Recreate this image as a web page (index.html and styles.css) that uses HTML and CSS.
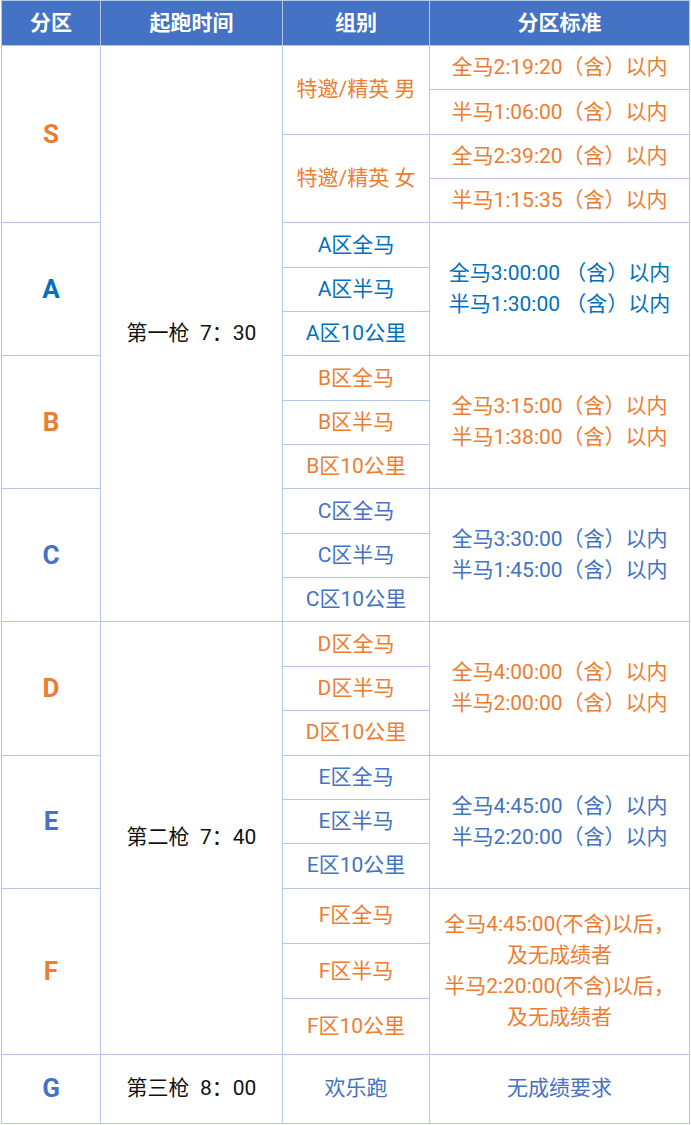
FILE: index.html
```html
<!DOCTYPE html>
<html lang="zh-CN">
<head>
    <meta charset="UTF-8">
    <meta name="viewport" content="width=device-width, initial-scale=1.0">
    <title>分区标准</title>
    <link rel="stylesheet" href="styles.css">
</head>
<body>
    <table class="zones">
        <colgroup>
            <col class="c-zone">
            <col class="c-time">
            <col class="c-group">
            <col class="c-rule">
        </colgroup>
        <thead>
            <tr>
                <th>分区</th>
                <th>起跑时间</th>
                <th>组别</th>
                <th>分区标准</th>
            </tr>
        </thead>
        <tbody>
            <!-- 第一枪 -->
            <tr class="row">
                <td rowspan="4" class="zone orange">S</td>
                <td rowspan="13" class="time">第一枪&nbsp;&nbsp;7：30</td>
                <td rowspan="2" class="orange">特邀/精英 男</td>
                <td class="orange">全马2:19:20（含）以内</td>
            </tr>
            <tr class="row">
                <td class="orange">半马1:06:00（含）以内</td>
            </tr>
            <tr class="row">
                <td rowspan="2" class="orange">特邀/精英 女</td>
                <td class="orange">全马2:39:20（含）以内</td>
            </tr>
            <tr class="row">
                <td class="orange">半马1:15:35（含）以内</td>
            </tr>

            <tr class="row">
                <td rowspan="3" class="zone deep">A</td>
                <td class="deep">A区全马</td>
                <td rowspan="3" class="deep rule">全马3:00:00 （含）以内<br>半马1:30:00 （含）以内</td>
            </tr>
            <tr class="row"><td class="deep">A区半马</td></tr>
            <tr class="row"><td class="deep">A区10公里</td></tr>

            <tr class="row">
                <td rowspan="3" class="zone orange">B</td>
                <td class="orange">B区全马</td>
                <td rowspan="3" class="orange rule">全马3:15:00（含）以内<br>半马1:38:00（含）以内</td>
            </tr>
            <tr class="row"><td class="orange">B区半马</td></tr>
            <tr class="row"><td class="orange">B区10公里</td></tr>

            <tr class="row">
                <td rowspan="3" class="zone blue">C</td>
                <td class="blue">C区全马</td>
                <td rowspan="3" class="blue rule">全马3:30:00（含）以内<br>半马1:45:00（含）以内</td>
            </tr>
            <tr class="row"><td class="blue">C区半马</td></tr>
            <tr class="row"><td class="blue">C区10公里</td></tr>

            <!-- 第二枪 -->
            <tr class="row">
                <td rowspan="3" class="zone orange">D</td>
                <td rowspan="9" class="time">第二枪&nbsp;&nbsp;7：40</td>
                <td class="orange">D区全马</td>
                <td rowspan="3" class="orange rule">全马4:00:00（含）以内<br>半马2:00:00（含）以内</td>
            </tr>
            <tr class="row"><td class="orange">D区半马</td></tr>
            <tr class="row"><td class="orange">D区10公里</td></tr>

            <tr class="row">
                <td rowspan="3" class="zone blue">E</td>
                <td class="blue">E区全马</td>
                <td rowspan="3" class="blue rule">全马4:45:00（含）以内<br>半马2:20:00（含）以内</td>
            </tr>
            <tr class="row"><td class="blue">E区半马</td></tr>
            <tr class="row"><td class="blue">E区10公里</td></tr>

            <tr class="row tall">
                <td rowspan="3" class="zone orange">F</td>
                <td class="orange">F区全马</td>
                <td rowspan="3" class="orange rule">全马4:45:00(不含)以后，<br>及无成绩者<br>半马2:20:00(不含)以后，<br>及无成绩者</td>
            </tr>
            <tr class="row tall"><td class="orange">F区半马</td></tr>
            <tr class="row tall"><td class="orange">F区10公里</td></tr>

            <!-- 第三枪 -->
            <tr class="row last">
                <td class="zone blue">G</td>
                <td class="time">第三枪&nbsp;&nbsp;8：00</td>
                <td class="blue">欢乐跑</td>
                <td class="blue">无成绩要求</td>
            </tr>
        </tbody>
    </table>
</body>
</html>
```

FILE: styles.css
```css
* {
    box-sizing: border-box;
}

body {
    margin: 0;
    padding: 0 1px;
    background: #fff;
    font-family: Roboto, "Noto Sans CJK SC", sans-serif;
}

.zones {
    width: 688px;
    border-collapse: collapse;
    table-layout: fixed;
}

.c-zone { width: 99px; }
.c-time { width: 182px; }
.c-group { width: 147px; }
.c-rule { width: 260px; }

.zones th,
.zones td {
    border: 1px solid #b4c7e7;
    padding: 0;
    text-align: center;
    vertical-align: middle;
    font-size: 21px;
    line-height: 31px;
    font-weight: normal;
}

.zones th {
    height: 45px;
    background: #4472c4;
    color: #fff;
    font-weight: bold;
}

.row { height: 44.35px; }
.row.tall { height: 55.33px; }
.row.last { height: 69px; }

.zones .zone {
    font-weight: bold;
    font-size: 26px;
}

.zones .time {
    color: #111;
}

.orange { color: #ed7d31; }
.deep { color: #0070c0; }
.blue { color: #4472c4; }
```
